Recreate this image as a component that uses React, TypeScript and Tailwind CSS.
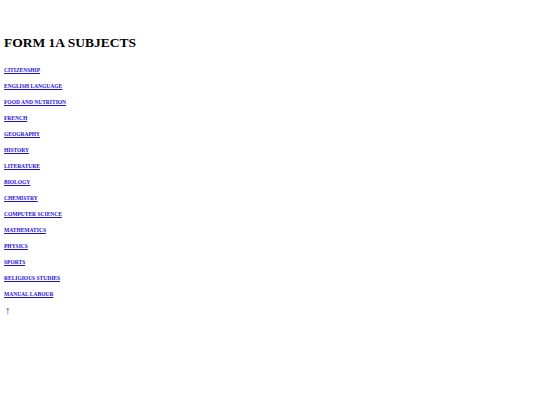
const SUBJECTS = [
  "CITIZENSHIP",
  "ENGLISH LANGUAGE",
  "FOOD AND NUTRITION",
  "FRENCH",
  "GEOGRAPHY",
  "HISTORY",
  "LITERATURE",
  "BIOLOGY",
  "CHEMISTRY",
  "COMPUTER SCIENCE",
  "MATHEMATICS",
  "PHYSICS",
  "SPORTS",
  "RELIGIOUS STUDIES",
  "MANUAL LABOUR",
];

export default function App() {
  return (
    <div className="w-[540px] h-[405px] bg-white pl-[4px] pt-[36px] text-black font-['Liberation_Serif',serif]">
      <h1 className="text-[13.5px] leading-[14px] font-bold">FORM 1A SUBJECTS</h1>
      <ul className="mt-[13px] flex flex-col">
        {SUBJECTS.map((s) => (
          <li key={s} className="h-[16px] leading-[8px]">
            <a href="#" className="text-[5.5px] font-bold text-[#1a10d8] underline">
              {s}
            </a>
          </li>
        ))}
        <li className="leading-[10px] mt-[1px]">
          <a href="#" className="text-[11px] text-[#3a2fb8] pl-[1px]">↑</a>
        </li>
      </ul>
    </div>
  );
}
